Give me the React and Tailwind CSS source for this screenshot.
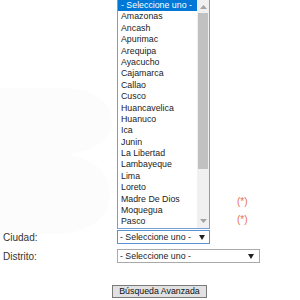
const provincias = [
  "Amazonas",
  "Ancash",
  "Apurimac",
  "Arequipa",
  "Ayacucho",
  "Cajamarca",
  "Callao",
  "Cusco",
  "Huancavelica",
  "Huanuco",
  "Ica",
  "Junin",
  "La Libertad",
  "Lambayeque",
  "Lima",
  "Loreto",
  "Madre De Dios",
  "Moquegua",
  "Pasco",
];

function Arrow() {
  return (
    <svg width="6" height="5" viewBox="0 0 6 5" className="shrink-0">
      <path d="M0 0h6L3 5z" fill="#222" />
    </svg>
  );
}

export default function App() {
  return (
    <div
      className="relative w-[300px] h-[300px] overflow-hidden bg-white text-[8.8px] text-[#222]"
      style={{ fontFamily: '"Liberation Sans", Arial, sans-serif' }}
    >
      {/* faint watermark behind the form */}
      <svg className="absolute left-0 top-0" width="120" height="240" viewBox="0 0 120 240">
        <path
          d="M0 88h60c30 0 50 12 52 30 2 22-20 34-46 36 28 4 44 20 44 40 0 24-22 40-56 40H0z"
          fill="#fcfcfc"
        />
      </svg>

      <div className="relative flex">
        <div className="w-[117px] shrink-0" />
        <div className="flex items-end">
          {/* open listbox */}
          <div className="-mt-px flex w-[93px] border border-[#7a9fd6] bg-white">
            <div className="flex flex-1 flex-col">
              <div className="h-[11.4px] leading-[11.4px] bg-[#0078d7] px-[3px] text-white whitespace-nowrap">
                - Seleccione uno -
              </div>
              {provincias.map((p) => (
                <div key={p} className="h-[11.4px] leading-[11.4px] px-[3px] whitespace-nowrap">
                  {p}
                </div>
              ))}
            </div>
            <div className="flex w-[12px] flex-col items-center bg-[#f0f0f0] py-px">
              <svg width="7" height="4" viewBox="0 0 7 4" className="mt-[4px]">
                <path d="M3.5 0L7 4H0z" fill="#a3a3a3" />
              </svg>
              <div className="mt-[4px] h-[156px] w-[10px] bg-[#c1c1c1]" />
              <div className="flex-1" />
              <svg width="7" height="4" viewBox="0 0 7 4" className="mb-[4px]">
                <path d="M0 0h7L3.5 4z" fill="#a3a3a3" />
              </svg>
            </div>
          </div>
          <div className="ml-[27px] flex flex-col gap-[3px] pb-[2px] text-[10px] leading-[15px] text-[#e8704e]">
            <span>(*)</span>
            <span>(*)</span>
          </div>
        </div>
      </div>

      <div className="relative mt-[1px] flex flex-col gap-[4px]">
        <div className="flex items-center">
          <span className="ml-[3px] w-[114px] text-[10px] text-[#333]">Ciudad:</span>
          <div className="flex h-[14px] w-[93px] items-center justify-between border border-[#5b92d6] bg-white pl-[2px] pr-[4px] whitespace-nowrap">
            <span>- Seleccione uno -</span>
            <Arrow />
          </div>
        </div>
        <div className="flex items-center">
          <span className="ml-[3px] w-[114px] text-[10px] text-[#333]">Distrito:</span>
          <div className="flex h-[14px] w-[143px] items-center justify-between border border-[#a9a9a9] bg-white pl-[2px] pr-[5px] whitespace-nowrap">
            <span>- Seleccione uno -</span>
            <Arrow />
          </div>
        </div>
      </div>

      <div className="relative mt-[21px] pl-[112px]">
        <button className="h-[13px] w-[95px] border border-[#7a7a7a] bg-[#e1e1e1] text-[8.8px] leading-[11px] text-[#111] whitespace-nowrap">
          Búsqueda Avanzada
        </button>
      </div>
    </div>
  );
}
